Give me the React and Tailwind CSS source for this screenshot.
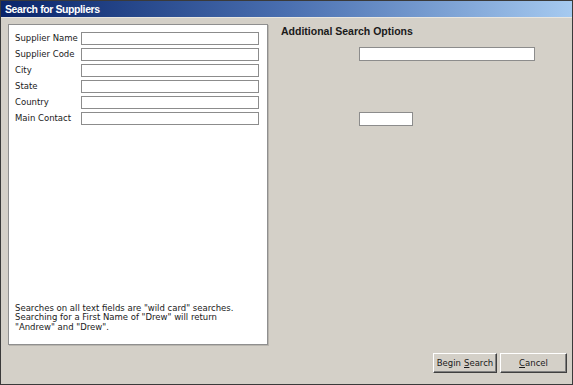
import React from 'react';

const fields = ['Supplier Name', 'Supplier Code', 'City', 'State', 'Country', 'Main Contact'];

const font = { fontFamily: '"DejaVu Sans", Verdana, sans-serif' };

const Field = ({ label }) => (
  <div className="flex items-center h-[16px]">
    <span className="w-[66px] text-[8.5px] text-[#1a1a1a] leading-none whitespace-nowrap">{label}</span>
    <div className="w-[178px] h-[13px] bg-white border border-[#8c8c8c]" />
  </div>
);

const WinButton = ({ children, width }) => (
  <button
    className={`${width} h-[20px] bg-[#d4d0c8] border border-t-white border-l-white border-r-[#404040] border-b-[#404040] shadow-[inset_-1px_-1px_0_#808080] text-[8.5px] text-[#1a1a1a] flex items-center justify-center`}
  >
    {children}
  </button>
);

const App = () => {
  return (
    <div className="w-[573px] h-[385px] border border-[#3a3a3a] bg-[#d4d0c8] flex flex-col" style={font}>
      {/* title bar */}
      <div className="h-[16px] bg-gradient-to-r from-[#0a246a] via-[#4a6fb0] to-[#a6caf0] flex items-center pl-[4px]">
        <span className="text-white font-bold text-[10.5px] tracking-[-0.4px] leading-none font-['Liberation_Sans',Arial,sans-serif]">
          Search for Suppliers
        </span>
      </div>
      <div className="h-px bg-[#e8e6e0]" />

      <div className="flex-1 flex flex-col px-[7px] pt-[6px]">
        <div className="flex h-[321px]">
          {/* left panel */}
          <div className="w-[260px] h-full bg-white border border-[#8f8f8f] shadow-[1px_1px_0_#b8b5ae] flex flex-col justify-between pl-[6px] pt-[5px] pb-[12px]">
            <div className="flex flex-col">
              {fields.map((f) => (
                <Field key={f} label={f} />
              ))}
            </div>
            <p className="text-[8.5px] leading-[9.5px] text-[#1a1a1a] pr-2">
              Searches on all text fields are "wild card" searches.
              <br />
              Searching for a First Name of "Drew" will return
              <br />
              "Andrew" and "Drew".
            </p>
          </div>

          {/* right section */}
          <div className="flex-1 flex flex-col pl-[13px] pt-[1px]">
            <h2 className="text-[10.5px] font-bold text-[#1a1a1a] leading-[12px] font-['Liberation_Sans',Arial,sans-serif]">
              Additional Search Options
            </h2>
            <div className="ml-[78px] mt-[10px] w-[176px] h-[14px] bg-white border border-[#8c8c8c]" />
            <div className="ml-[78px] mt-[51px] w-[54px] h-[14px] bg-white border border-[#8c8c8c]" />
          </div>
        </div>

        <div className="flex justify-end gap-[3px] mt-[8px] mr-[-2px]">
          <WinButton width="w-[64px]">
            Begin <span className="underline ml-[3px]">S</span>earch
          </WinButton>
          <WinButton width="w-[67px]">
            <span className="underline">C</span>ancel
          </WinButton>
        </div>
      </div>
    </div>
  );
};

export default App;
